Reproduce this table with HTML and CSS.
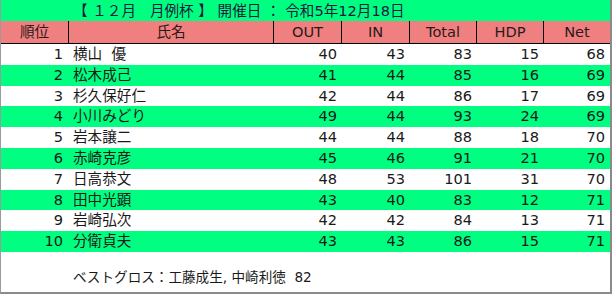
FILE: index.html
```html
<!DOCTYPE html>
<html lang="ja">
<head>
<meta charset="utf-8">
<link rel="stylesheet" href="styles.css">
</head>
<body>
<div class="sheet">
  <div class="row title"><span></span><span class="ttl">【 １２月&nbsp;&nbsp; 月例杯 】 開催日 ： 令和5年12月18日</span></div>
  <div class="row head">
    <span>順位</span><span>氏名</span><span>OUT</span><span>IN</span><span>Total</span><span>HDP</span><span>Net</span>
  </div>
  <div class="row"><span class="n">1</span><span class="nm">横山&nbsp; 優</span><span class="n">40</span><span class="n">43</span><span class="n">83</span><span class="n">15</span><span class="n">68</span></div>
  <div class="row g"><span class="n">2</span><span class="nm">松木成己</span><span class="n">41</span><span class="n">44</span><span class="n">85</span><span class="n">16</span><span class="n">69</span></div>
  <div class="row"><span class="n">3</span><span class="nm">杉久保好仁</span><span class="n">42</span><span class="n">44</span><span class="n">86</span><span class="n">17</span><span class="n">69</span></div>
  <div class="row g"><span class="n">4</span><span class="nm">小川みどり</span><span class="n">49</span><span class="n">44</span><span class="n">93</span><span class="n">24</span><span class="n">69</span></div>
  <div class="row"><span class="n">5</span><span class="nm">岩本譲二</span><span class="n">44</span><span class="n">44</span><span class="n">88</span><span class="n">18</span><span class="n">70</span></div>
  <div class="row g"><span class="n">6</span><span class="nm">赤崎克彦</span><span class="n">45</span><span class="n">46</span><span class="n">91</span><span class="n">21</span><span class="n">70</span></div>
  <div class="row"><span class="n">7</span><span class="nm">日高恭文</span><span class="n">48</span><span class="n">53</span><span class="n">101</span><span class="n">31</span><span class="n">70</span></div>
  <div class="row g"><span class="n">8</span><span class="nm">田中光顕</span><span class="n">43</span><span class="n">40</span><span class="n">83</span><span class="n">12</span><span class="n">71</span></div>
  <div class="row"><span class="n">9</span><span class="nm">岩崎弘次</span><span class="n">42</span><span class="n">42</span><span class="n">84</span><span class="n">13</span><span class="n">71</span></div>
  <div class="row g"><span class="n">10</span><span class="nm">分衛貞夫</span><span class="n">43</span><span class="n">43</span><span class="n">86</span><span class="n">15</span><span class="n">71</span></div>
  <div class="foot">ベストグロス：工藤成生, 中崎利徳&nbsp; 82</div>
</div>
</body>
</html>
```
FILE: styles.css
```css
html, body {
  margin: 0;
  padding: 0;
  background: #ffffff;
}
.sheet {
  box-sizing: border-box;
  width: 612px;
  height: 294px;
  border-left: 1px solid #9a9a9a;
  border-right: 2px solid #8a8a8a;
  border-bottom: 2px solid #8a8a8a;
  font-family: "DejaVu Sans", "Noto Sans CJK JP", sans-serif;
  font-size: 14.6px;
  color: #1a1a1a;
  display: flex;
  flex-direction: column;
}
.row {
  display: grid;
  grid-template-columns: 68px 205px 68px 68px 67px 67px 66px;
  height: 20.8px;
  line-height: 20.8px;
}
.row > span {
  box-sizing: border-box;
  white-space: nowrap;
  overflow: hidden;
}
.title {
  height: 21px;
  line-height: 21px;
  background: #00ff80;
  color: #1a1a40;
}
.title .ttl {
  grid-column: 2 / 8;
  padding-left: 4px;
}
.head {
  height: 22px;
  line-height: 21px;
  background: #f08080;
  border-bottom: 1px solid #000;
  color: #2a1a1a;
}
.head > span {
  text-align: center;
  border-right: 1px solid #000;
}
.head > span:last-child {
  border-right: none;
}
.g {
  background: #00ff80;
}
.n {
  text-align: right;
  padding-right: 5px;
}
.row > .n:first-child {
  padding-right: 6px;
}
.nm {
  padding-left: 4px;
}
.foot {
  padding-left: 72px;
  margin-top: 15px;
  line-height: 20px;
  font-size: 13.6px;
}
```
